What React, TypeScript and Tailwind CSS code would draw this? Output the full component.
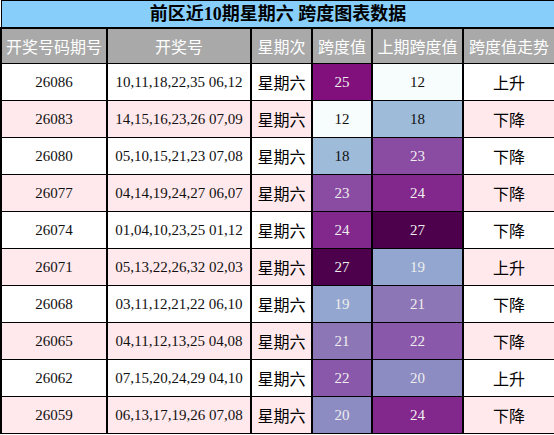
import React from 'react';

type Row = {
  issue: string;
  nums: string;
  span: number;
  prev: number;
  trend: string;
};

const rows: Row[] = [
  { issue: '26086', nums: '10,11,18,22,35 06,12', span: 25, prev: 12, trend: '上升' },
  { issue: '26083', nums: '14,15,16,23,26 07,09', span: 12, prev: 18, trend: '下降' },
  { issue: '26080', nums: '05,10,15,21,23 07,08', span: 18, prev: 23, trend: '下降' },
  { issue: '26077', nums: '04,14,19,24,27 06,07', span: 23, prev: 24, trend: '下降' },
  { issue: '26074', nums: '01,04,10,23,25 01,12', span: 24, prev: 27, trend: '下降' },
  { issue: '26071', nums: '05,13,22,26,32 02,03', span: 27, prev: 19, trend: '上升' },
  { issue: '26068', nums: '03,11,12,21,22 06,10', span: 19, prev: 21, trend: '下降' },
  { issue: '26065', nums: '04,11,12,13,25 04,08', span: 21, prev: 22, trend: '下降' },
  { issue: '26062', nums: '07,15,20,24,29 04,10', span: 22, prev: 20, trend: '上升' },
  { issue: '26059', nums: '06,13,17,19,26 07,08', span: 20, prev: 24, trend: '下降' },
];

// heat colours per span value
const heat: Record<number, string> = {
  12: 'bg-[#f7fcfd] text-[#111]',
  18: 'bg-[#9ebcda] text-[#111]',
  19: 'bg-[#92a6cf] text-[#eee]',
  20: 'bg-[#8c8cc2] text-[#eee]',
  21: 'bg-[#8c76b6] text-[#eee]',
  22: 'bg-[#8a58aa] text-[#eee]',
  23: 'bg-[#8a4ba2] text-[#eee]',
  24: 'bg-[#82288c] text-[#eee]',
  25: 'bg-[#810f7c] text-[#eee]',
  27: 'bg-[#4d004b] text-[#eee]',
};

const cjk = "font-['Noto_Sans_CJK_SC',sans-serif]";
const serif = "font-['Liberation_Serif','Noto_Sans_CJK_SC',serif]";

export default function App() {
  return (
    <div className="w-[554px] h-[435px] bg-white overflow-hidden">
      <table className="w-[554px] border-collapse table-fixed border border-black">
        <colgroup>
          <col className="w-[106px]" />
          <col className="w-[144px]" />
          <col className="w-[61px]" />
          <col className="w-[60px]" />
          <col className="w-[91px]" />
          <col className="w-[92px]" />
        </colgroup>
        <thead>
          <tr className="h-[27px] bg-[#87cefa]">
            <th colSpan={6} className={`border-b-2 border-black text-[18px] font-bold text-black leading-none ${serif}`}>
              前区近10期星期六 跨度图表数据
            </th>
          </tr>
          <tr className="h-[36px] bg-[#a9a9a9] text-white">
            {['开奖号码期号', '开奖号', '星期次', '跨度值', '上期跨度值', '跨度值走势'].map((h) => (
              <th key={h} className={`border-x-2 border-b border-black font-normal text-[16px] ${cjk}`}>
                {h}
              </th>
            ))}
          </tr>
        </thead>
        <tbody>
          {rows.map((r, i) => (
            <tr key={r.issue} className={`h-[37px] ${i % 2 === 1 ? 'bg-[#ffe9ec]' : 'bg-white'}`}>
              <td className={`border-x-2 border-y border-black text-center text-[15px] text-[#111] ${serif}`}>{r.issue}</td>
              <td className={`border-x-2 border-y border-black text-center text-[15px] text-[#111] ${serif}`}>{r.nums}</td>
              <td className={`border-x-2 border-y border-black text-center text-[16px] text-black ${cjk}`}>星期六</td>
              <td className={`border-x-2 border-y border-black text-center text-[15px] ${serif} ${heat[r.span]}`}>{r.span}</td>
              <td className={`border-x-2 border-y border-black text-center text-[15px] ${serif} ${heat[r.prev]}`}>{r.prev}</td>
              <td className={`border-x-2 border-y border-black text-center text-[16px] text-black ${cjk}`}>{r.trend}</td>
            </tr>
          ))}
        </tbody>
      </table>
    </div>
  );
}
